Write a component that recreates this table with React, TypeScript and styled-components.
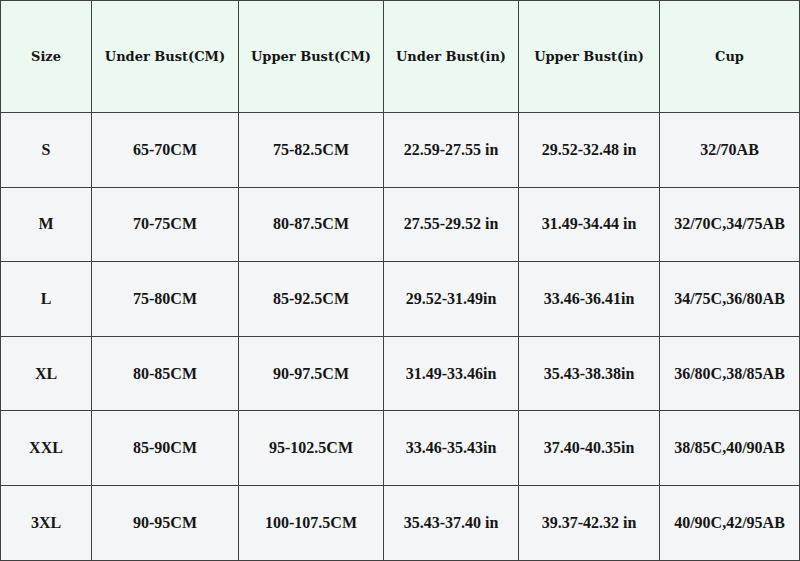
import React from "react";
import styled, { createGlobalStyle } from "styled-components";

const GlobalStyle = createGlobalStyle`
  html, body {
    margin: 0;
    padding: 0;
    background: #ffffff;
  }
`;

const columns = [
  { label: "Size", width: 91 },
  { label: "Under Bust(CM)", width: 147 },
  { label: "Upper Bust(CM)", width: 145 },
  { label: "Under Bust(in)", width: 135 },
  { label: "Upper Bust(in)", width: 141 },
  { label: "Cup", width: 140 },
];

const rows = [
  ["S", "65-70CM", "75-82.5CM", "22.59-27.55 in", "29.52-32.48 in", "32/70AB"],
  ["M", "70-75CM", "80-87.5CM", "27.55-29.52 in", "31.49-34.44 in", "32/70C,34/75AB"],
  ["L", "75-80CM", "85-92.5CM", "29.52-31.49in", "33.46-36.41in", "34/75C,36/80AB"],
  ["XL", "80-85CM", "90-97.5CM", "31.49-33.46in", "35.43-38.38in", "36/80C,38/85AB"],
  ["XXL", "85-90CM", "95-102.5CM", "33.46-35.43in", "37.40-40.35in", "38/85C,40/90AB"],
  ["3XL", "90-95CM", "100-107.5CM", "35.43-37.40 in", "39.37-42.32 in", "40/90C,42/95AB"],
];

const Table = styled.table`
  width: 799px;
  height: 560px;
  table-layout: fixed;
  border-collapse: collapse;
  color: #151515;
`;

const HeadRow = styled.tr`
  height: 112px;
  background: #ebf9f0;
`;

const BodyRow = styled.tr`
  height: 74.6px;
  background: #f4f5f7;
`;

const HeadCell = styled.th`
  border: 1.5px solid #404040;
  padding: 0 4px;
  text-align: center;
  vertical-align: middle;
  font-family: "DejaVu Serif", Georgia, serif;
  font-weight: bold;
  font-size: 13px;
  white-space: nowrap;
`;

const Cell = styled.td`
  border: 1.5px solid #404040;
  padding: 0 4px;
  text-align: center;
  vertical-align: middle;
  font-family: "Liberation Serif", "Times New Roman", serif;
  font-weight: bold;
  font-size: 16px;
  white-space: nowrap;
`;

export default function App() {
  return (
    <>
      <GlobalStyle />
      <Table>
        <colgroup>
          {columns.map((c) => (
            <col key={c.label} style={{ width: c.width }} />
          ))}
        </colgroup>
        <thead>
          <HeadRow>
            {columns.map((c) => (
              <HeadCell key={c.label}>{c.label}</HeadCell>
            ))}
          </HeadRow>
        </thead>
        <tbody>
          {rows.map((r) => (
            <BodyRow key={r[0]}>
              {r.map((v, i) => (
                <Cell key={i}>{v}</Cell>
              ))}
            </BodyRow>
          ))}
        </tbody>
      </Table>
    </>
  );
}
